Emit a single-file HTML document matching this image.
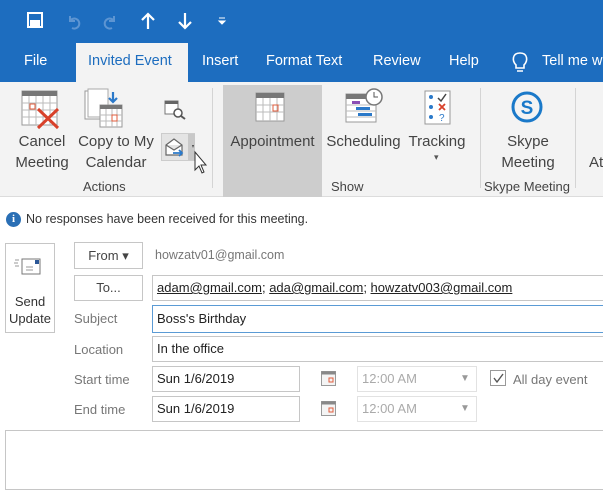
<!DOCTYPE html>
<html><head><meta charset="utf-8"><style>
*{margin:0;padding:0;box-sizing:border-box}
body{width:603px;height:469px;overflow:hidden;background:#fff;font-family:"Liberation Sans",sans-serif;position:relative;color:#333}
.a{position:absolute;white-space:nowrap}
.top{left:0;top:0;width:603px;height:82px;background:#1d6dbf}
.tab{color:#fff;font-size:14.5px;top:53px}
.rib{left:0;top:82px;width:603px;height:115px;background:#f3f3f3;border-bottom:1px solid #dcdcdc}
.lbl{font-size:15px;color:#444;text-align:center;line-height:21px}
.grp{font-size:13px;color:#444}
.sep{width:1px;background:#d4d4d4;top:88px;height:100px}
.fld{border:1px solid #c6c6c6;background:#fff;font-size:13px;color:#222;padding-left:4px}
.gl{font-size:13px;color:#777}
.btn{border:1px solid #c6c6c6;background:#fff;font-size:13px;color:#444;text-align:center}
</style></head><body>
<div class="a top"></div>
<svg class="a" style="left:26px;top:11px" width="210" height="20">
<g fill="none" stroke="#fff" stroke-width="2">
<rect x="2" y="2" width="14" height="14"/><rect x="5" y="10" width="8" height="6" fill="#fff"/>
</g>
<path d="M44 10 a5 5 0 1 1 2 7 M44 5 v5 h5" stroke="#5d95d2" stroke-width="2" fill="none"/>
<path d="M88 10 a5 5 0 1 0 -2 7 M88 5 v5 h-5" stroke="#5d95d2" stroke-width="2" fill="none"/>
<path d="M122 18 V3 M116 9 L122 3 L128 9" stroke="#fff" stroke-width="2.2" fill="none"/>
<path d="M159 2 V17 M153 11 L159 17 L165 11" stroke="#fff" stroke-width="2.2" fill="none"/>
<path d="M193 7 h6 M193 10 l3 3 l3 -3z" stroke="#fff" stroke-width="1" fill="#fff"/>
</svg>
<div class="a" style="left:76px;top:43px;width:112px;height:40px;background:#f3f3f3"></div>
<div class="a tab" style="left:24px">File</div>
<div class="a tab" style="left:88px;color:#1d6dbf">Invited Event</div>
<div class="a tab" style="left:202px">Insert</div>
<div class="a tab" style="left:266px">Format Text</div>
<div class="a tab" style="left:373px">Review</div>
<div class="a tab" style="left:449px">Help</div>
<svg class="a" style="left:511px;top:51px" width="18" height="22"><path d="M5 14 C1 10 1 2 9 2 C17 2 17 10 13 14 V17 H5Z M6 20 H12" stroke="#fff" stroke-width="1.6" fill="none"/></svg>
<div class="a tab" style="left:542px">Tell me w</div>
<div class="a rib"></div>
<svg class="a" style="left:21px;top:90px" width="42" height="40">
<rect x="1" y="1" width="35" height="34" fill="#fff" stroke="#999"/><rect x="1" y="1" width="35" height="5" fill="#777"/>
<path d="M1 13H36M1 20H36M1 27H36M8 6V35M15 6V35M22 6V35M29 6V35" stroke="#bbb"/>
<rect x="9" y="14" width="5" height="5" fill="none" stroke="#e05c3c"/>
<path d="M17 19 L37 38 M37 19 L17 38" stroke="#d8412a" stroke-width="3"/>
</svg>
<div class="a lbl" style="left:12px;top:131px;width:60px">Cancel<br>Meeting</div>
<svg class="a" style="left:84px;top:88px" width="40" height="42">
<rect x="1" y="3" width="20" height="28" fill="#fff" stroke="#999"/><rect x="4" y="1" width="20" height="28" fill="#fff" stroke="#aaa"/>
<path d="M29 4 V14 M25 10 L29 14 L33 10" stroke="#2b79c9" stroke-width="2.2" fill="none"/>
<rect x="16" y="17" width="22" height="22" fill="#fff" stroke="#999"/><rect x="16" y="17" width="22" height="4" fill="#777"/>
<path d="M16 27H38M16 33H38M22 21V39M28 21V39M33 21V39" stroke="#bbb"/>
<rect x="28" y="27" width="5" height="6" fill="none" stroke="#e05c3c"/>
</svg>
<div class="a lbl" style="left:74px;top:131px;width:84px">Copy to My<br>Calendar</div>
<svg class="a" style="left:164px;top:100px" width="22" height="20"><rect x="1" y="1" width="13" height="13" fill="#fff" stroke="#777"/><rect x="1" y="1" width="13" height="3" fill="#666"/><circle cx="14" cy="13" r="4" fill="#fff" stroke="#555" stroke-width="1.5"/><path d="M17 16 L21 19" stroke="#555" stroke-width="2"/></svg>
<div class="a" style="left:161px;top:133px;width:34px;height:28px;background:#e4e4e4;border:1px solid #ccc"></div>
<div class="a" style="left:188px;top:134px;width:7px;height:26px;background:#c8c8c8"></div>
<svg class="a" style="left:164px;top:138px" width="22" height="20"><path d="M2 7 L10 1 L18 7 V17 H2Z M2 7 L10 12 L18 7" stroke="#666" fill="#fff" stroke-width="1.2"/><path d="M9 15 H18 M15 12 L18 15 L15 18" stroke="#2b79c9" stroke-width="1.8" fill="none"/></svg>
<svg class="a" style="left:191px;top:144px" width="20" height="30"><path d="M1 1 L2 4 L3 1Z" fill="#444"/><path d="M4 8 V26 L8 22 L11 29 L13 28 L10 21 L15 21Z" fill="#fff" stroke="#333"/></svg>
<div class="a grp" style="left:83px;top:179px">Actions</div>
<div class="a sep" style="left:212px"></div>
<div class="a" style="left:223px;top:85px;width:99px;height:112px;background:#cdcdcd"></div>
<svg class="a" style="left:255px;top:92px" width="32" height="32"><rect x="1" y="1" width="28" height="28" fill="#fff" stroke="#999"/><rect x="1" y="1" width="28" height="5" fill="#777"/><path d="M1 13H29M1 20H29M8 6V29M15 6V29M22 6V29" stroke="#bbb"/><rect x="18" y="13" width="5" height="6" fill="none" stroke="#e05c3c"/></svg>
<div class="a lbl" style="left:223px;top:131px;width:99px">Appointment</div>
<svg class="a" style="left:344px;top:88px" width="42" height="36"><rect x="2" y="6" width="30" height="28" fill="#fff" stroke="#999"/><rect x="2" y="6" width="30" height="5" fill="#777"/><path d="M2 17H32M2 23H32M2 29H32" stroke="#bbb"/><rect x="8" y="13" width="8" height="3" fill="#8a4fb5"/><rect x="12" y="19" width="14" height="3" fill="#2b79c9"/><rect x="14" y="25" width="14" height="3" fill="#2b79c9"/><circle cx="30" cy="9" r="8" fill="#fff" stroke="#777" stroke-width="1.5"/><path d="M30 4 V9 H34" stroke="#555" fill="none"/></svg>
<div class="a lbl" style="left:325px;top:131px;width:77px">Scheduling</div>
<svg class="a" style="left:424px;top:90px" width="28" height="36"><rect x="1" y="1" width="25" height="33" fill="#fff" stroke="#999"/><g fill="#2b79c9"><circle cx="7" cy="7" r="2"/><circle cx="7" cy="17" r="2"/><circle cx="7" cy="27" r="2"/></g><path d="M14 8 L17 11 L22 4" stroke="#444" fill="none" stroke-width="1.5"/><path d="M15 14 L21 20 M21 14 L15 20" stroke="#d8412a" stroke-width="1.8"/><text x="15" y="31" font-size="10" fill="#2b79c9" font-family="Liberation Sans">?</text></svg>
<div class="a lbl" style="left:406px;top:131px;width:62px">Tracking</div>
<div class="a" style="left:434px;top:152px;font-size:9px;color:#555">▾</div>
<div class="a sep" style="left:480px"></div>
<svg class="a" style="left:510px;top:90px" width="34" height="34"><path d="M17 3 A14 14 0 0 1 31 17 A14 14 0 0 1 17 31 A14 14 0 0 1 3 17 A14 14 0 0 1 17 3Z" fill="none" stroke="#1a79c9" stroke-width="3"/><text x="17" y="24" text-anchor="middle" font-size="19" font-weight="bold" fill="#1a79c9" font-family="Liberation Sans">S</text></svg>
<div class="a lbl" style="left:487px;top:131px;width:82px">Skype<br>Meeting</div>
<div class="a grp" style="left:484px;top:179px">Skype Meeting</div>
<div class="a grp" style="left:331px;top:179px">Show</div>
<div class="a sep" style="left:575px"></div>
<div class="a lbl" style="left:589px;top:152px">At</div>
<div class="a" style="left:6px;top:212px;width:15px;height:15px;border-radius:50%;background:#2a6fb5;color:#fff;font-size:11px;font-weight:bold;text-align:center;line-height:15px;font-family:'Liberation Serif',serif">i</div>
<div class="a" style="left:26px;top:212px;font-size:12.5px;color:#333">No responses have been received for this meeting.</div>
<div class="a btn" style="left:5px;top:243px;width:50px;height:90px"></div>
<svg class="a" style="left:13px;top:257px" width="32" height="22"><path d="M2 3 H6 M1 6 H5 M2 9 H6" stroke="#999"/><rect x="9" y="2" width="18" height="15" fill="#fff" stroke="#777"/><rect x="22" y="3" width="4" height="4" fill="#2b5797"/><path d="M13 10 H20 M13 13 H20" stroke="#999"/></svg>
<div class="a" style="left:5px;top:293px;width:50px;text-align:center;font-size:13px;line-height:17px;color:#333">Send<br>Update</div>
<div class="a btn" style="left:74px;top:242px;width:69px;height:27px;line-height:25px">From ▾</div>
<div class="a" style="left:155px;top:248px;font-size:12.5px;color:#777">howzatv01@gmail.com</div>
<div class="a btn" style="left:74px;top:275px;width:69px;height:26px;line-height:24px">To...</div>
<div class="a fld" style="left:152px;top:275px;width:460px;height:26px;line-height:24px"><u>adam@gmail.com</u>; <u>ada@gmail.com</u>; <u>howzatv003@gmail.com</u></div>
<div class="a gl" style="left:74px;top:311px">Subject</div>
<div class="a fld" style="left:152px;top:305px;width:460px;height:28px;line-height:26px;border-color:#5b9bd5">Boss's Birthday</div>
<div class="a gl" style="left:74px;top:342px">Location</div>
<div class="a fld" style="left:152px;top:336px;width:460px;height:26px;line-height:24px">In the office</div>
<div class="a gl" style="left:74px;top:372px">Start time</div>
<div class="a fld" style="left:152px;top:366px;width:148px;height:26px;line-height:24px">Sun 1/6/2019</div>
<div class="a gl" style="left:74px;top:402px">End time</div>
<div class="a fld" style="left:152px;top:396px;width:148px;height:26px;line-height:24px">Sun 1/6/2019</div>
<svg class="a" style="left:321px;top:371px" width="16" height="16"><rect x=".5" y=".5" width="14" height="14" fill="#f4f4f4" stroke="#999"/><rect x=".5" y=".5" width="14" height="3" fill="#888"/><rect x="8" y="7" width="4" height="4" fill="none" stroke="#e05c3c"/></svg>
<svg class="a" style="left:321px;top:401px" width="16" height="16"><rect x=".5" y=".5" width="14" height="14" fill="#f4f4f4" stroke="#999"/><rect x=".5" y=".5" width="14" height="3" fill="#888"/><rect x="8" y="7" width="4" height="4" fill="none" stroke="#e05c3c"/></svg>
<div class="a fld" style="left:357px;top:366px;width:120px;height:26px;line-height:24px;border-color:#e2e2e2;color:#aaa">12:00 AM</div>
<div class="a fld" style="left:357px;top:396px;width:120px;height:26px;line-height:24px;border-color:#e2e2e2;color:#aaa">12:00 AM</div>
<div class="a" style="left:460px;top:373px;font-size:10px;color:#999">▼</div>
<div class="a" style="left:460px;top:403px;font-size:10px;color:#999">▼</div>
<div class="a" style="left:490px;top:370px;width:16px;height:16px;border:1px solid #999;background:#fff"></div>
<svg class="a" style="left:492px;top:372px" width="13" height="13"><path d="M2 6 L5 10 L11 2" stroke="#555" stroke-width="1.4" fill="none"/></svg>
<div class="a gl" style="left:513px;top:372px">All day event</div>
<div class="a" style="left:5px;top:430px;width:610px;height:60px;border:1px solid #c6c6c6"></div>
</body></html>
